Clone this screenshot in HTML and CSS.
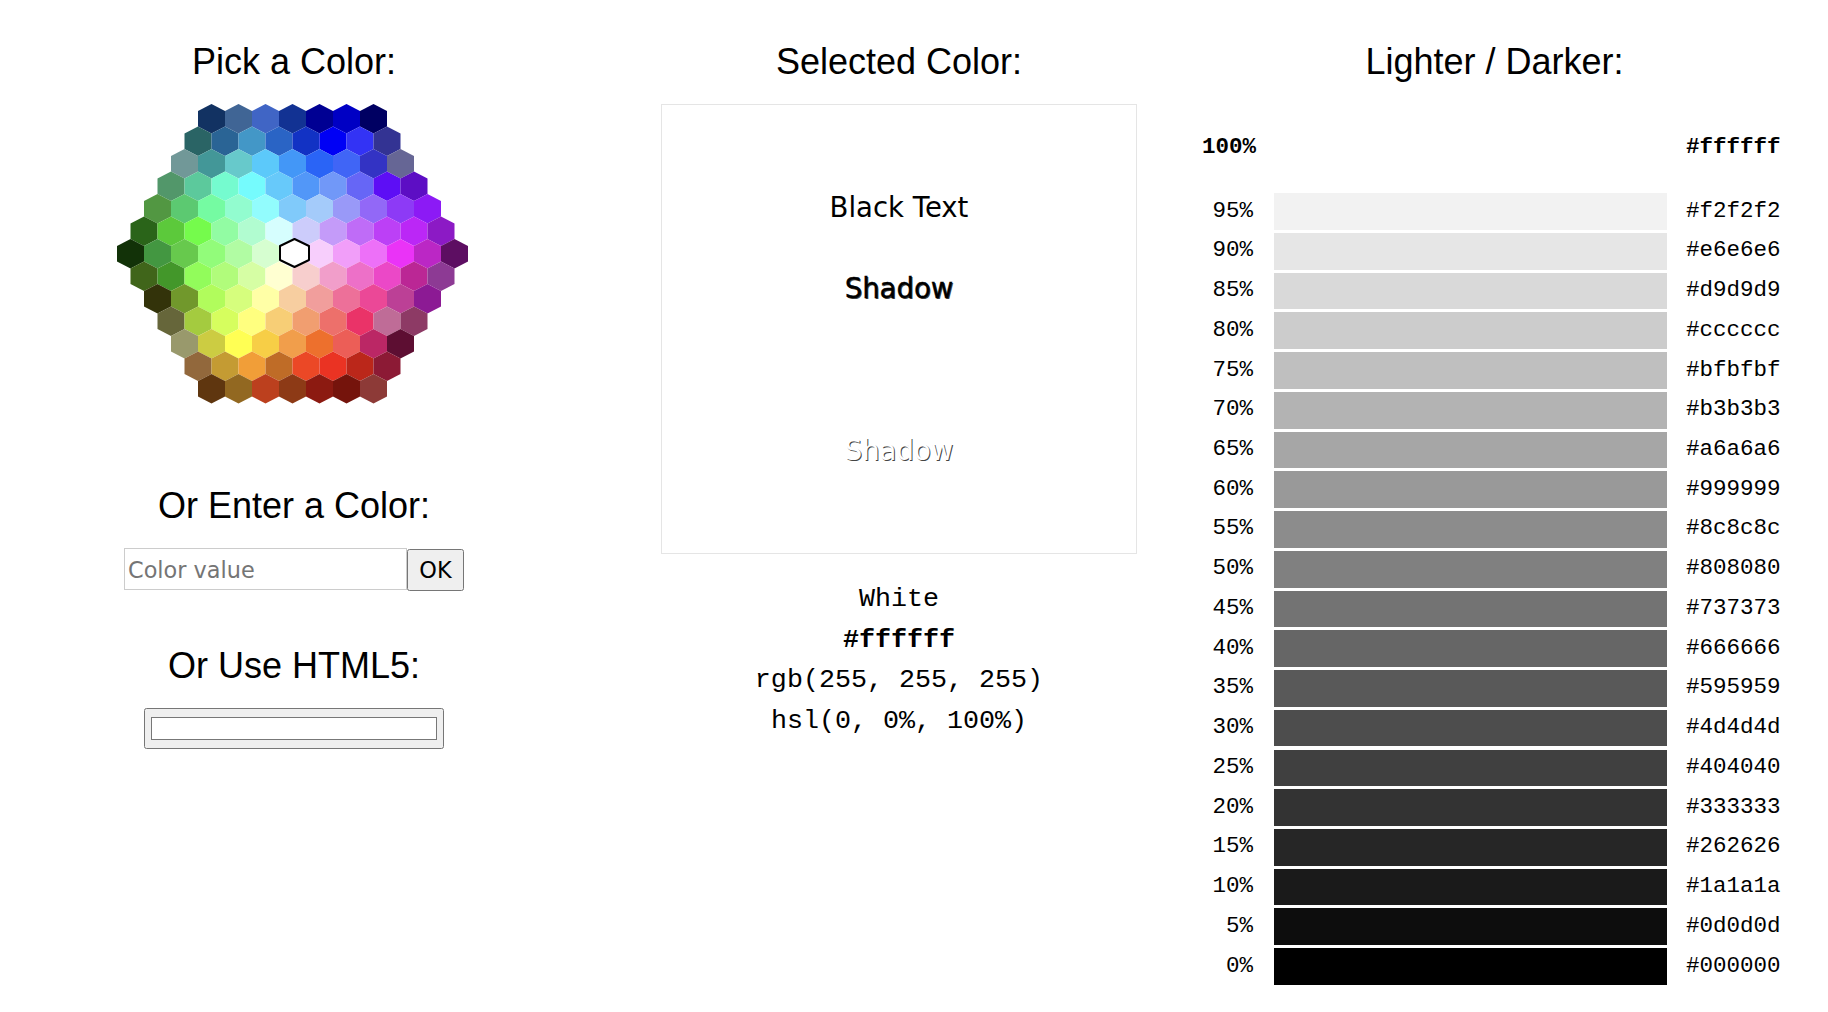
FILE: index.html
```html
<!DOCTYPE html>
<html lang="en">
<head>
  <meta charset="UTF-8" />
  <meta name="viewport" content="width=device-width, initial-scale=1.0" />
  <title>Colors Picker</title>
  <link rel="stylesheet" href="styles.css">
</head>
<body>
  <div class="picker-col">
    <h2 class="head-pick">Pick a Color:</h2>
    <svg id="colormap" class="colormap" width="354" height="300" viewBox="0 0 354 300"></svg>
    <h2 class="head-enter">Or Enter a Color:</h2>
    <div class="enter-row">
      <input class="color-text" type="text" placeholder="Color value">
      <button class="ok-btn" type="button">OK</button>
    </div>
    <h2 class="head-html5">Or Use HTML5:</h2>
    <input class="color-well" type="color" value="#ffffff">
  </div>

  <div class="selected-col">
    <h2 class="head-pick">Selected Color:</h2>
    <div class="swatch">
      <div class="swatch-line sample-black">Black Text</div>
      <div class="swatch-line sample-dark">Shadow</div>
      <div class="swatch-line sample-light">Shadow</div>
    </div>
    <div class="values">
      <div>White</div>
      <div class="strong">#ffffff</div>
      <div>rgb(255, 255, 255)</div>
      <div>hsl(0, 0%, 100%)</div>
    </div>
  </div>

  <div class="shades-col">
    <h2 class="head-pick">Lighter / Darker:</h2>
    <div class="shades">
      <div class="shade strong"><span class="pct">100%</span><span class="bar bar-white"></span><span class="hex">#ffffff</span></div>
      <div class="shade shade-first"><span class="pct">95%</span><span class="bar g95"></span><span class="hex">#f2f2f2</span></div>
      <div class="shade"><span class="pct">90%</span><span class="bar g90"></span><span class="hex">#e6e6e6</span></div>
      <div class="shade"><span class="pct">85%</span><span class="bar g85"></span><span class="hex">#d9d9d9</span></div>
      <div class="shade"><span class="pct">80%</span><span class="bar g80"></span><span class="hex">#cccccc</span></div>
      <div class="shade"><span class="pct">75%</span><span class="bar g75"></span><span class="hex">#bfbfbf</span></div>
      <div class="shade"><span class="pct">70%</span><span class="bar g70"></span><span class="hex">#b3b3b3</span></div>
      <div class="shade"><span class="pct">65%</span><span class="bar g65"></span><span class="hex">#a6a6a6</span></div>
      <div class="shade"><span class="pct">60%</span><span class="bar g60"></span><span class="hex">#999999</span></div>
      <div class="shade"><span class="pct">55%</span><span class="bar g55"></span><span class="hex">#8c8c8c</span></div>
      <div class="shade"><span class="pct">50%</span><span class="bar g50"></span><span class="hex">#808080</span></div>
      <div class="shade"><span class="pct">45%</span><span class="bar g45"></span><span class="hex">#737373</span></div>
      <div class="shade"><span class="pct">40%</span><span class="bar g40"></span><span class="hex">#666666</span></div>
      <div class="shade"><span class="pct">35%</span><span class="bar g35"></span><span class="hex">#595959</span></div>
      <div class="shade"><span class="pct">30%</span><span class="bar g30"></span><span class="hex">#4d4d4d</span></div>
      <div class="shade"><span class="pct">25%</span><span class="bar g25"></span><span class="hex">#404040</span></div>
      <div class="shade"><span class="pct">20%</span><span class="bar g20"></span><span class="hex">#333333</span></div>
      <div class="shade"><span class="pct">15%</span><span class="bar g15"></span><span class="hex">#262626</span></div>
      <div class="shade"><span class="pct">10%</span><span class="bar g10"></span><span class="hex">#1a1a1a</span></div>
      <div class="shade"><span class="pct">5%</span><span class="bar g5"></span><span class="hex">#0d0d0d</span></div>
      <div class="shade"><span class="pct">0%</span><span class="bar g0"></span><span class="hex">#000000</span></div>
    </div>
  </div>

  <script src="colormap.js"></script>
</body>
</html>
```

FILE: styles.css
```css
html, body {
  margin: 0;
  padding: 0;
  background: #ffffff;
  overflow: hidden;
}
body {
  display: flex;
  height: 1012px;
  font-family: "DejaVu Sans", sans-serif;
  color: #000;
}
h2 {
  margin: 0;
  font-family: "Liberation Sans", Arial, sans-serif;
  font-weight: 400;
  font-size: 36px;
  line-height: 42px;
  text-align: center;
}
.head-pick {
  padding-top: 41px;
}

/* left column */
.picker-col {
  width: 588px;
  display: flex;
  flex-direction: column;
  align-items: center;
}
.colormap {
  display: block;
  margin-top: 21px;
}
.head-enter {
  margin-top: 81px;
}
.enter-row {
  display: flex;
  align-items: flex-start;
  margin-top: 21px;
}
.color-text {
  box-sizing: border-box;
  width: 283px;
  height: 42px;
  padding: 2px 3px 0;
  margin: 0;
  border: 1px solid #cccccc;
  font-family: "DejaVu Sans", sans-serif;
  font-size: 22.4px;
  outline: none;
}
.color-text::placeholder {
  color: #757575;
}
.ok-btn {
  box-sizing: border-box;
  width: 57px;
  height: 42px;
  margin: 1px 0 0;
  padding: 0;
  font-family: "DejaVu Sans", sans-serif;
  font-size: 22.4px;
  color: #000;
}
.head-html5 {
  margin-top: 54px;
}
.color-well {
  box-sizing: border-box;
  width: 300px;
  height: 41px;
  margin: 21px 0 0;
  padding: 4px;
}

/* middle column */
.selected-col {
  width: 476px;
  margin-left: 73px;
}
.swatch {
  box-sizing: border-box;
  height: 450px;
  margin-top: 21px;
  padding-top: 86px;
  border: 1px solid #e5e5e5;
  text-align: center;
  font-size: 27.5px;
}
.swatch-line {
  height: 81.2px;
  line-height: 32px;
}
.sample-dark {
  -webkit-text-stroke: 0.3px #000;
  text-shadow: 1px 1px 0 #444;
}
.sample-light {
  margin-top: 80.2px;
  color: #fff;
  text-shadow: 1px 1px 0 #444;
}
.values {
  margin-top: 25px;
  text-align: center;
  font-family: "Liberation Mono", "Courier New", monospace;
  font-size: 26.7px;
  line-height: 40.7px;
}
.strong {
  font-weight: 700;
}

/* right column */
.shades-col {
  width: 585px;
  margin-left: 65px;
}
.shades {
  margin-top: 45.5px;
  font-family: "Liberation Mono", "Courier New", monospace;
  font-size: 22.5px;
}
.shade {
  display: flex;
  align-items: center;
  height: 39.74px;
}
.shade-first {
  margin-top: 23.5px;
}
.pct {
  width: 51px;
  margin-bottom: 2px;
  text-align: right;
}
.bar {
  width: 393px;
  height: 36.7px;
  margin: 0 19px 0 21px;
}
.hex {
  width: 100px;
  margin-bottom: 2px;
}
.bar-white { background: #ffffff; }
.g95 { background: #f2f2f2; }
.g90 { background: #e6e6e6; }
.g85 { background: #d9d9d9; }
.g80 { background: #cccccc; }
.g75 { background: #bfbfbf; }
.g70 { background: #b3b3b3; }
.g65 { background: #a6a6a6; }
.g60 { background: #999999; }
.g55 { background: #8c8c8c; }
.g50 { background: #808080; }
.g45 { background: #737373; }
.g40 { background: #666666; }
.g35 { background: #595959; }
.g30 { background: #4d4d4d; }
.g25 { background: #404040; }
.g20 { background: #333333; }
.g15 { background: #262626; }
.g10 { background: #1a1a1a; }
.g5 { background: #0d0d0d; }
.g0 { background: #000000; }
```

FILE: colormap.js
```js
// hexagon rows of the color map, top to bottom
var rows = [
  "003366 336699 3366CC 003399 000099 0000CC 000066",
  "006666 006699 0099CC 0066CC 0033CC 0000FF 3333FF 333399",
  "669999 009999 33CCCC 00CCFF 0099FF 0066FF 3366FF 3333CC 666699",
  "339966 00CC99 00FFCC 00FFFF 33CCFF 3399FF 6699FF 6666FF 6600FF 6600CC",
  "339933 00CC66 00FF99 66FFCC 66FFFF 66CCFF 99CCFF 9999FF 9966FF 9933FF 9900FF",
  "006600 00CC00 00FF00 66FF99 99FFCC CCFFFF CCCCFF CC99FF CC66FF CC33FF CC00FF 9900CC",
  "003300 009933 33CC33 66FF66 99FF99 CCFFCC FFFFFF FFCCFF FF99FF FF66FF FF00FF CC00CC 660066",
  "336600 009900 66FF33 99FF66 CCFF99 FFFFCC FFCCCC FF99CC FF66CC FF33CC CC0099 993399",
  "333300 669900 99FF33 CCFF66 FFFF99 FFCC99 FF9999 FF6699 FF3399 CC3399 990099",
  "666633 99CC00 CCFF33 FFFF66 FFCC66 FF9966 FF6666 FF0066 CC6699 993366",
  "999966 CCCC00 FFFF00 FFCC00 FF9933 FF6600 FF5050 CC0066 660033",
  "996633 CC9900 FF9900 CC6600 FF3300 FF0000 CC0000 990033",
  "663300 996600 CC3300 993300 990000 800000 993333"
];

var NS = "http://www.w3.org/2000/svg";
var W = 27, PEAK = 7, SIDE = 15.5, PITCH = 22.5;

// the map was captured on a wide gamut display, so shift each color the same way
function toLinear(v) {
  return v <= 0.04045 ? v / 12.92 : Math.pow((v + 0.055) / 1.055, 2.4);
}
function toGamma(v) {
  return v <= 0.0031308 ? v * 12.92 : 1.055 * Math.pow(v, 1 / 2.4) - 0.055;
}
function shift(hex) {
  var r = toLinear(parseInt(hex.slice(0, 2), 16) / 255);
  var g = toLinear(parseInt(hex.slice(2, 4), 16) / 255);
  var b = toLinear(parseInt(hex.slice(4, 6), 16) / 255);
  var out = [
    0.8225 * r + 0.1774 * g,
    0.0332 * r + 0.9669 * g,
    0.0171 * r + 0.0724 * g + 0.9108 * b
  ];
  return "rgb(" + out.map(function (v) {
    return Math.round(toGamma(v) * 255);
  }).join(",") + ")";
}

function hexPoints(x, y, w, h, peak) {
  return [
    [x, y + peak], [x + w / 2, y], [x + w, y + peak],
    [x + w, y + h - peak], [x + w / 2, y + h], [x, y + h - peak]
  ].map(function (p) { return p.join(","); }).join(" ");
}

var map = document.getElementById("colormap");
rows.forEach(function (row, r) {
  var cells = row.split(" ");
  var left = (13 - cells.length) * W / 2;
  cells.forEach(function (c, i) {
    var poly = document.createElementNS(NS, "polygon");
    poly.setAttribute("points", hexPoints(left + i * W, r * PITCH, W, 29.5, PEAK));
    poly.setAttribute("fill", c === "FFFFFF" ? "#ffffff" : shift(c));
    map.appendChild(poly);
  });
});

// marker on the selected color, a bit bigger than the cell and off its center
var mark = document.createElementNS(NS, "polygon");
mark.setAttribute("points", hexPoints(163, 135, 29, 28, 7));
mark.setAttribute("fill", "#ffffff");
mark.setAttribute("stroke", "#000000");
mark.setAttribute("stroke-width", "2");
mark.setAttribute("stroke-linejoin", "round");
map.appendChild(mark);
```
